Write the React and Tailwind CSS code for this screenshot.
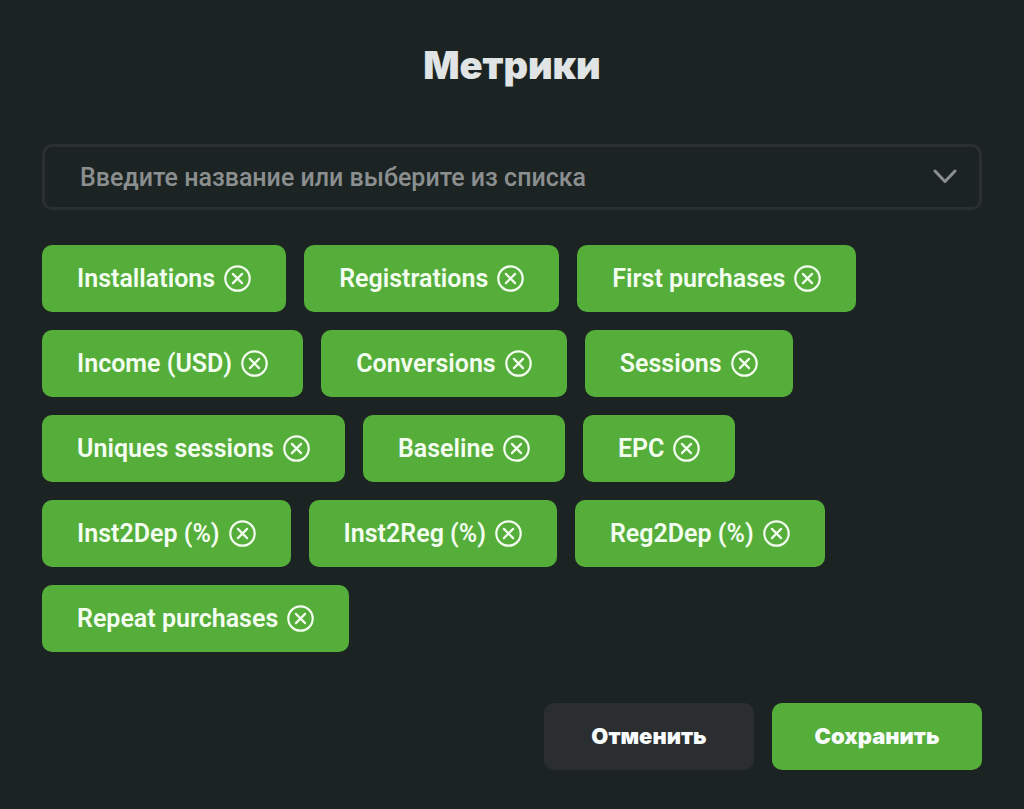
import React, { useState } from 'react';

const METRICS = [
  'Installations',
  'Registrations',
  'First purchases',
  'Income (USD)',
  'Conversions',
  'Sessions',
  'Uniques sessions',
  'Baseline',
  'EPC',
  'Inst2Dep (%)',
  'Inst2Reg (%)',
  'Reg2Dep (%)',
  'Repeat purchases',
];

const RemoveIcon = () => (
  <svg
    className="w-[27px] h-[27px] shrink-0"
    viewBox="0 0 27 27"
    fill="none"
    stroke="currentColor"
    strokeWidth="2.2"
    strokeLinecap="round"
    aria-hidden="true"
  >
    <circle cx="13.5" cy="13.5" r="12.2" />
    <path d="M8.9 8.9l9.2 9.2M18.1 8.9l-9.2 9.2" />
  </svg>
);

const ChevronIcon = () => (
  <svg
    className="w-6 h-6"
    viewBox="0 0 24 24"
    fill="none"
    stroke="currentColor"
    strokeWidth="3"
    strokeLinecap="round"
    strokeLinejoin="round"
    aria-hidden="true"
  >
    <path d="M2 6l10 10.5L22 6" />
  </svg>
);

const MetricChip = ({ name, onRemove }) => (
  <li className="flex items-center gap-[9px] h-[67px] px-[35px] rounded-[10px] bg-[#55ad3a] text-[25px] font-semibold text-[#f3fdf0] whitespace-nowrap">
    {name}
    <button type="button" onClick={onRemove} aria-label={`Удалить ${name}`}>
      <RemoveIcon />
    </button>
  </li>
);

const App = () => {
  const [selected, setSelected] = useState(METRICS);
  const [query, setQuery] = useState('');

  const removeMetric = (name) => {
    setSelected((prev) => prev.filter((item) => item !== name));
  };

  return (
    <main className="min-h-screen bg-[#1c2423] px-[42px] pt-[39px] pb-9 font-['Roboto','Noto_Sans',sans-serif]">
      <h1 className="text-center text-[38px] leading-[52px] font-black text-[#e1e4e4] font-['Inter',sans-serif]">
        Метрики
      </h1>

      <form className="mt-[53px]" onSubmit={(e) => e.preventDefault()}>
        <div className="flex items-center h-[66px] pl-[35px] pr-[22px] border-[3px] border-[#2a2f30] rounded-[10px]">
          <input
            type="text"
            role="combobox"
            aria-expanded="false"
            aria-label="Метрика"
            value={query}
            onChange={(e) => setQuery(e.target.value)}
            placeholder="Введите название или выберите из списка"
            className="flex-1 min-w-0 pt-0.5 bg-transparent outline-none text-[25px] font-medium text-[#e1e4e4] placeholder:text-[#8b8f8f]"
          />
          <button type="button" aria-label="Открыть список" className="text-[#8b8f8f]">
            <ChevronIcon />
          </button>
        </div>

        <ul className="mt-[35px] flex flex-wrap gap-[18px]">
          {selected.map((name) => (
            <MetricChip key={name} name={name} onRemove={() => removeMetric(name)} />
          ))}
        </ul>

        <div className="mt-[51px] flex justify-end gap-[18px] text-[22px] font-black text-[#f8fbfc] font-['Inter',sans-serif]">
          <button type="button" className="w-[210px] h-[67px] rounded-[10px] bg-[#2a2e30]">
            Отменить
          </button>
          <button type="submit" className="w-[210px] h-[67px] rounded-[10px] bg-[#55ad3a]">
            Сохранить
          </button>
        </div>
      </form>
    </main>
  );
};

export default App;
